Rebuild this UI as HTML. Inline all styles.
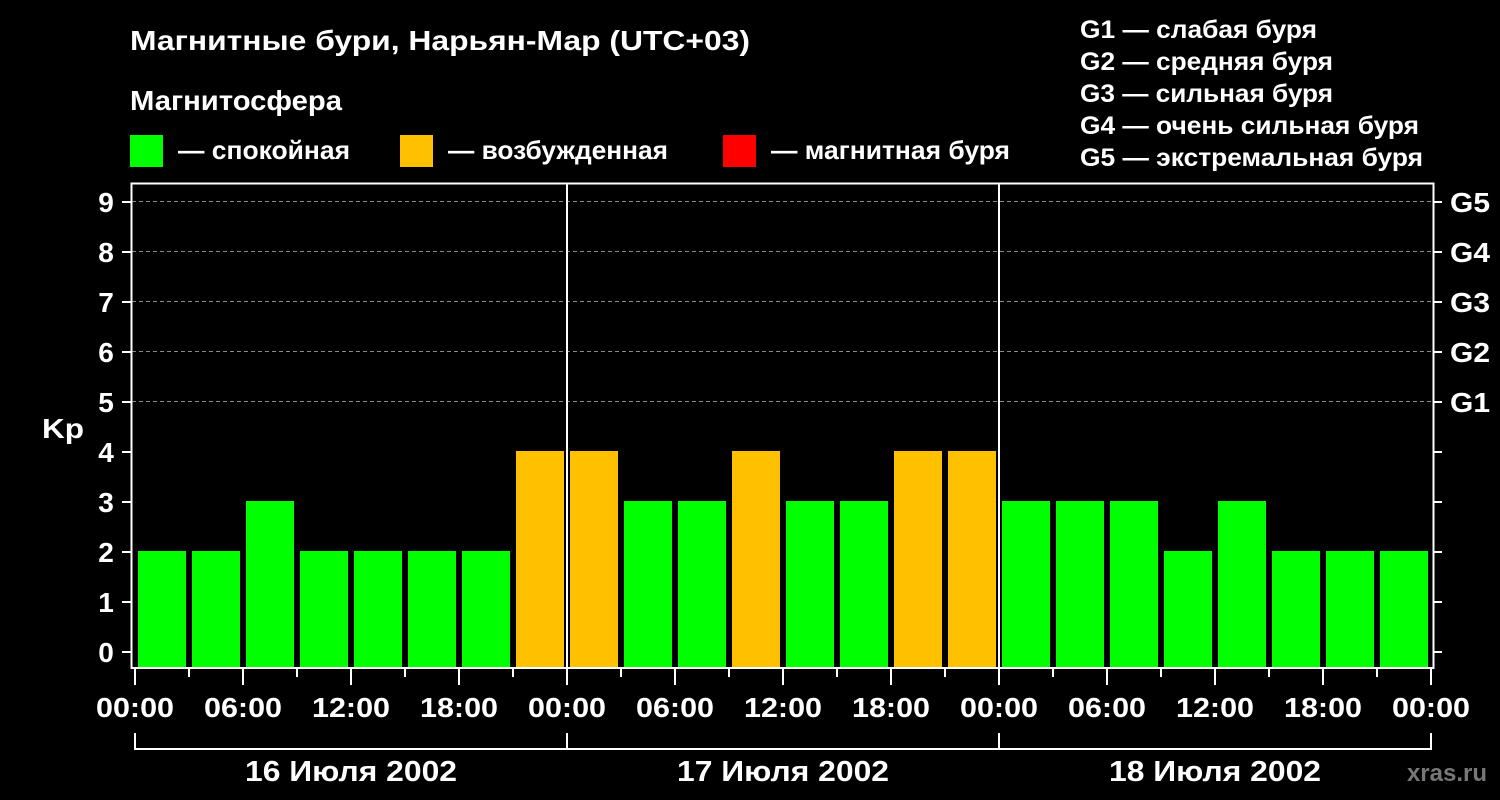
<!DOCTYPE html><html><head><meta charset="utf-8"><style>html,body{margin:0;background:#000;}svg{display:block}text{font-family:"Liberation Sans",Arial,sans-serif;font-weight:bold;fill:#fff}</style></head><body>
<svg width="1500" height="800" viewBox="0 0 1500 800" font-family="Liberation Sans, Arial, sans-serif" font-weight="bold">
<text x="130" y="50" font-size="28" textLength="620" lengthAdjust="spacingAndGlyphs">Магнитные бури, Нарьян-Мар (UTC+03)</text>
<text x="130" y="110" font-size="28" textLength="212" lengthAdjust="spacingAndGlyphs">Магнитосфера</text>
<rect x="130" y="135" width="33" height="32" fill="#00ff00"/><text x="178" y="159" font-size="26" textLength="172" lengthAdjust="spacingAndGlyphs">— спокойная</text>
<rect x="400" y="135" width="33" height="32" fill="#ffc000"/><text x="448" y="159" font-size="26" textLength="220" lengthAdjust="spacingAndGlyphs">— возбужденная</text>
<rect x="723" y="135" width="33" height="32" fill="#ff0000"/><text x="771" y="159" font-size="26" textLength="239" lengthAdjust="spacingAndGlyphs">— магнитная буря</text>
<g font-size="25"><text x="1080" y="38" textLength="237" lengthAdjust="spacingAndGlyphs">G1 — слабая буря</text><text x="1080" y="70" textLength="253" lengthAdjust="spacingAndGlyphs">G2 — средняя буря</text><text x="1080" y="102" textLength="253" lengthAdjust="spacingAndGlyphs">G3 — сильная буря</text><text x="1080" y="134" textLength="339" lengthAdjust="spacingAndGlyphs">G4 — очень сильная буря</text><text x="1080" y="166" textLength="343" lengthAdjust="spacingAndGlyphs">G5 — экстремальная буря</text></g>
<g stroke="#888" stroke-dasharray="4,3" stroke-width="1"><line x1="132" x2="1432" y1="201.5" y2="201.5"/><line x1="132" x2="1432" y1="251.5" y2="251.5"/><line x1="132" x2="1432" y1="301.5" y2="301.5"/><line x1="132" x2="1432" y1="351.5" y2="351.5"/><line x1="132" x2="1432" y1="401.5" y2="401.5"/></g>
<g fill="#00ff00">
<rect x="138" y="551" width="48" height="117"/><rect x="192" y="551" width="48" height="117"/><rect x="246" y="501" width="48" height="167"/><rect x="300" y="551" width="48" height="117"/><rect x="354" y="551" width="48" height="117"/><rect x="408" y="551" width="48" height="117"/><rect x="462" y="551" width="48" height="117"/>
<rect x="624" y="501" width="48" height="167"/><rect x="678" y="501" width="48" height="167"/><rect x="786" y="501" width="48" height="167"/><rect x="840" y="501" width="48" height="167"/>
<rect x="1002" y="501" width="48" height="167"/><rect x="1056" y="501" width="48" height="167"/><rect x="1110" y="501" width="48" height="167"/><rect x="1164" y="551" width="48" height="117"/><rect x="1218" y="501" width="48" height="167"/><rect x="1272" y="551" width="48" height="117"/><rect x="1326" y="551" width="48" height="117"/><rect x="1380" y="551" width="48" height="117"/>
</g>
<g fill="#ffc000"><rect x="516" y="451" width="48" height="217"/><rect x="570" y="451" width="48" height="217"/><rect x="732" y="451" width="48" height="217"/><rect x="894" y="451" width="48" height="217"/><rect x="948" y="451" width="48" height="217"/></g>
<g stroke="#fff" stroke-width="2" fill="none">
<rect x="131.5" y="183.5" width="1302" height="484.5"/>
<line x1="567" y1="183" x2="567" y2="668"/><line x1="999" y1="183" x2="999" y2="668"/>
<path d="M122 652H131M122 602H131M122 552H131M122 502H131M122 452H131M122 402H131M122 352H131M122 302H131M122 252H131M122 202H131"/>
<path d="M1433 652H1442M1433 602H1442M1433 552H1442M1433 502H1442M1433 452H1442M1433 402H1442M1433 352H1442M1433 302H1442M1433 252H1442M1433 202H1442"/>
<path d="M135 669V685M243 669V685M351 669V685M459 669V685M567 669V685M675 669V685M783 669V685M891 669V685M999 669V685M1107 669V685M1215 669V685M1323 669V685M1431 669V685"/>
<path d="M189 669V677M297 669V677M405 669V677M513 669V677M621 669V677M729 669V677M837 669V677M945 669V677M1053 669V677M1161 669V677M1269 669V677M1377 669V677"/>
<path d="M135 733V749H1431V733M567 733V749M999 733V749"/>
</g>
<g font-size="28" text-anchor="middle">
<text x="106" y="662">0</text><text x="106" y="612">1</text><text x="106" y="562">2</text><text x="106" y="512">3</text><text x="106" y="462">4</text><text x="106" y="412">5</text><text x="106" y="362">6</text><text x="106" y="312">7</text><text x="106" y="262">8</text><text x="106" y="212">9</text>
</g>
<g font-size="28"><text x="1450" y="412" textLength="40" lengthAdjust="spacingAndGlyphs">G1</text><text x="1450" y="362" textLength="40" lengthAdjust="spacingAndGlyphs">G2</text><text x="1450" y="312" textLength="40" lengthAdjust="spacingAndGlyphs">G3</text><text x="1450" y="262" textLength="40" lengthAdjust="spacingAndGlyphs">G4</text><text x="1450" y="212" textLength="40" lengthAdjust="spacingAndGlyphs">G5</text></g>
<g font-size="28" text-anchor="middle">
<text x="135" y="717" textLength="78" lengthAdjust="spacingAndGlyphs">00:00</text><text x="243" y="717" textLength="78" lengthAdjust="spacingAndGlyphs">06:00</text><text x="351" y="717" textLength="78" lengthAdjust="spacingAndGlyphs">12:00</text><text x="459" y="717" textLength="78" lengthAdjust="spacingAndGlyphs">18:00</text><text x="567" y="717" textLength="78" lengthAdjust="spacingAndGlyphs">00:00</text><text x="675" y="717" textLength="78" lengthAdjust="spacingAndGlyphs">06:00</text><text x="783" y="717" textLength="78" lengthAdjust="spacingAndGlyphs">12:00</text><text x="891" y="717" textLength="78" lengthAdjust="spacingAndGlyphs">18:00</text><text x="999" y="717" textLength="78" lengthAdjust="spacingAndGlyphs">00:00</text><text x="1107" y="717" textLength="78" lengthAdjust="spacingAndGlyphs">06:00</text><text x="1215" y="717" textLength="78" lengthAdjust="spacingAndGlyphs">12:00</text><text x="1323" y="717" textLength="78" lengthAdjust="spacingAndGlyphs">18:00</text><text x="1431" y="717" textLength="78" lengthAdjust="spacingAndGlyphs">00:00</text>
</g>
<text x="42" y="438" font-size="28" textLength="42" lengthAdjust="spacingAndGlyphs">Kp</text>
<g font-size="29" text-anchor="middle"><text x="351" y="781" textLength="212" lengthAdjust="spacingAndGlyphs">16 Июля 2002</text><text x="783" y="781" textLength="212" lengthAdjust="spacingAndGlyphs">17 Июля 2002</text><text x="1215" y="781" textLength="212" lengthAdjust="spacingAndGlyphs">18 Июля 2002</text></g>
<text x="1487" y="781" font-size="24" text-anchor="end" style="fill:#777">xras.ru</text>
</svg></body></html>
